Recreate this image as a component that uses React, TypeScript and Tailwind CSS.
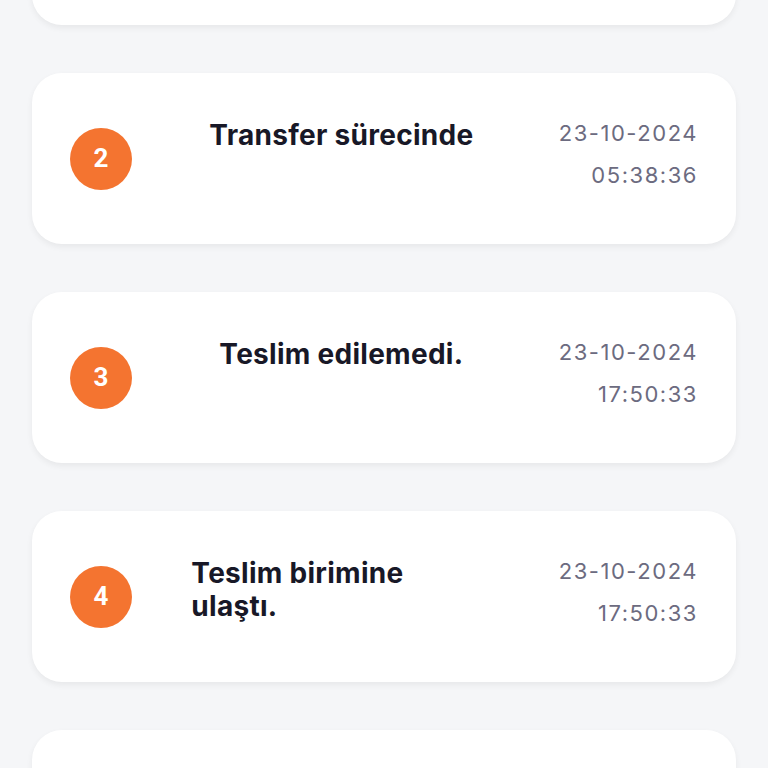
const steps = [
  { n: 1, title: "Kabul edildi.", date: "22-10-2024", time: "16:12:04" },
  { n: 2, title: "Transfer sürecinde", date: "23-10-2024", time: "05:38:36" },
  { n: 3, title: "Teslim edilemedi.", date: "23-10-2024", time: "17:50:33" },
  { n: 4, title: "Teslim birimine ulaştı.", date: "23-10-2024", time: "17:50:33" },
  { n: 5, title: "Teslim edildi.", date: "24-10-2024", time: "10:05:12" },
];

export default function App() {
  return (
    <div className="h-screen overflow-hidden bg-[#f5f6f8] font-['Inter',sans-serif]">
      <div className="-mt-[146px] flex flex-col gap-12 px-8 pb-12">
        {steps.map((s) => (
          <div
            key={s.n}
            className="flex h-[171px] items-center rounded-[30px] bg-white pl-[38px] pr-[38px] shadow-[0_3px_6px_rgba(0,0,0,0.06)]"
          >
            <div className="flex h-[62px] w-[62px] shrink-0 items-center justify-center rounded-full bg-[#f47430] font-['Roboto',sans-serif] text-[26px] font-bold text-white">
              {s.n}
            </div>
            <div className="flex flex-1 items-start self-stretch pt-[46px]">
              <div className="flex flex-1 justify-center pr-2">
                <div className="max-w-[300px] text-[28px] font-bold leading-[33px] tracking-[0.01em] text-[#181827]">
                  {s.title}
                </div>
              </div>
              <div className="flex flex-col items-end gap-[13px] text-[22px] leading-[29px] tracking-[0.07em] text-[#6c6b80]">
                <span>{s.date}</span>
                <span>{s.time}</span>
              </div>
            </div>
          </div>
        ))}
      </div>
    </div>
  );
}
